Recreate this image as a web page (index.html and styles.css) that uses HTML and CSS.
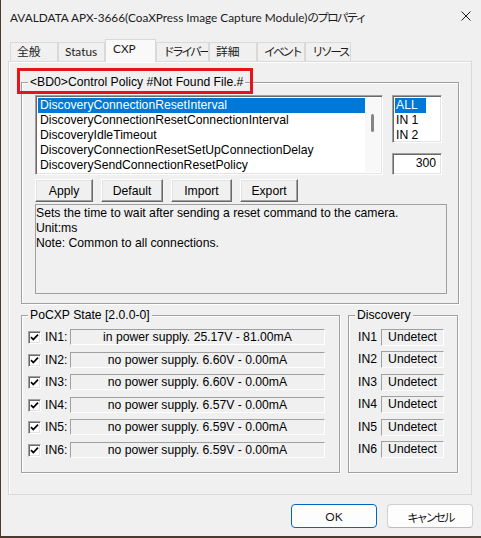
FILE: index.html
```html
<!doctype html>
<html lang="ja">
<head>
<meta charset="utf-8">
<title>AVALDATA APX-3666 properties</title>
<link rel="stylesheet" href="styles.css">
</head>

<body>
<div class="window">
  <div class="titlebar">
    <span class="title">AVALDATA APX-3666(CoaXPress Image Capture Module)<span class="kana">のプロパティ</span></span>
    <svg class="close" width="10" height="10" viewBox="0 0 10 10"><path d="M0.5 0.5L9.5 9.5M9.5 0.5L0.5 9.5"/></svg>
  </div>

  <div class="tabs">
    <div class="tab w48">全般</div>
    <div class="tab w47">Status</div>
    <div class="tab active">CXP</div>
    <div class="tab w53"><span class="kana">ドライバー</span></div>
    <div class="tab w48">詳細</div>
    <div class="tab w48"><span class="kana">イベント</span></div>
    <div class="tab w46"><span class="kana">リソース</span></div>
  </div>

  <div class="panel">
    <div class="group policy">
      <div class="legend">&lt;BD0&gt;Control Policy #Not Found File.#</div>
      <div class="toprow">
        <div class="edge listbox params">
          <div class="items">
            <div class="item sel">DiscoveryConnectionResetInterval</div>
            <div class="item">DiscoveryConnectionResetConnectionInterval</div>
            <div class="item">DiscoveryIdleTimeout</div>
            <div class="item">DiscoveryConnectionResetSetUpConnectionDelay</div>
            <div class="item">DiscoverySendConnectionResetPolicy</div>
          </div>
          <div class="vscroll"><span class="thumb"></span></div>
        </div>
        <div class="side">
          <div class="edge listbox channels">
            <div class="item sel">ALL</div>
            <div class="item">IN 1</div>
            <div class="item">IN 2</div>
          </div>
          <div class="edge value">300</div>
        </div>
      </div>
      <div class="btnrow">
        <button class="btn w58">Apply</button>
        <button class="btn w62">Default</button>
        <button class="btn w61">Import</button>
        <button class="btn w58">Export</button>
      </div>
      <div class="desc">
        Sets the time to wait after sending a reset command to the camera.<br>
        Unit:ms<br>
        Note: Common to all connections.
      </div>
    </div>

    <div class="lower">
      <div class="group pocxp">
        <div class="legend">PoCXP State [2.0.0-0]</div>
        <div class="rows">
          <div class="row"><span class="check"><svg width="9" height="9" viewBox="0 0 9 9"><path d="M1 4.2L3.3 6.6L8 1.6"/></svg></span><span class="lbl">IN1:</span><span class="field">in power supply. 25.17V - 81.00mA</span></div>
          <div class="row"><span class="check"><svg width="9" height="9" viewBox="0 0 9 9"><path d="M1 4.2L3.3 6.6L8 1.6"/></svg></span><span class="lbl">IN2:</span><span class="field">no power supply. 6.60V - 0.00mA</span></div>
          <div class="row"><span class="check"><svg width="9" height="9" viewBox="0 0 9 9"><path d="M1 4.2L3.3 6.6L8 1.6"/></svg></span><span class="lbl">IN3:</span><span class="field">no power supply. 6.60V - 0.00mA</span></div>
          <div class="row"><span class="check"><svg width="9" height="9" viewBox="0 0 9 9"><path d="M1 4.2L3.3 6.6L8 1.6"/></svg></span><span class="lbl">IN4:</span><span class="field">no power supply. 6.57V - 0.00mA</span></div>
          <div class="row"><span class="check"><svg width="9" height="9" viewBox="0 0 9 9"><path d="M1 4.2L3.3 6.6L8 1.6"/></svg></span><span class="lbl">IN5:</span><span class="field">no power supply. 6.59V - 0.00mA</span></div>
          <div class="row"><span class="check"><svg width="9" height="9" viewBox="0 0 9 9"><path d="M1 4.2L3.3 6.6L8 1.6"/></svg></span><span class="lbl">IN6:</span><span class="field">no power supply. 6.59V - 0.00mA</span></div>
        </div>
      </div>
      <div class="group disc">
        <div class="legend">Discovery</div>
        <div class="rows">
          <div class="row"><span class="lbl">IN1</span><span class="field">Undetect</span></div>
          <div class="row"><span class="lbl">IN2</span><span class="field">Undetect</span></div>
          <div class="row"><span class="lbl">IN3</span><span class="field">Undetect</span></div>
          <div class="row"><span class="lbl">IN4</span><span class="field">Undetect</span></div>
          <div class="row"><span class="lbl">IN5</span><span class="field">Undetect</span></div>
          <div class="row"><span class="lbl">IN6</span><span class="field">Undetect</span></div>
        </div>
      </div>
    </div>
  </div>

  <div class="footer">
    <button class="dlgbtn default">OK</button>
    <button class="dlgbtn"><span class="kana">キャンセル</span></button>
  </div>

  <!-- highlight frame around the group caption -->
  <div class="mark"></div>
</div>
</body>
</html>
```

FILE: styles.css
```css
body {
  margin: 0;
  background: #4a3a2f;
}

.window {
  position: relative;
  width: 480px;
  height: 536px;
  margin-left: 1px;
  background: #f0f0f0;
  font-family: "Liberation Sans", Arial, sans-serif;
  font-size: 12.2px;
  color: #000;
}

/* system font for caption, tabs and dialog buttons */
.titlebar,
.tabs,
.dlgbtn {
  font-family: Lato, "Noto Sans CJK JP", sans-serif;
  font-size: 11.8px;
  color: #1b1b1b;
}
.kana {
  letter-spacing: -2.7px;
}
.title .kana {
  letter-spacing: -2px;
}

/* title bar */
.titlebar {
  height: 32px;
  display: flex;
  align-items: center;
  padding: 0 10px 0 9px;
}
.titlebar .title {
  flex: 1;
  white-space: nowrap;
}
.close path {
  stroke: #1b1b1b;
  stroke-width: 1;
  fill: none;
}

/* tabs */
.tabs {
  display: flex;
  align-items: flex-end;
  height: 24px;
  margin-top: 5px;
  padding-left: 9px;
}
.tab {
  height: 19px;
  line-height: 18px;
  padding-left: 6px;
  border: 1px solid #d9d9d9;
  border-bottom: 0;
  box-sizing: border-box;
  white-space: nowrap;
  overflow: hidden;
}
.tab.active {
  position: relative;
  z-index: 1;
  width: 51px;
  height: 23px;
  line-height: 18px;
  padding-left: 7px;
  margin-bottom: -1px;
  background: #f9f9f9;
}
.w46 { width: 46px; }
.w47 { width: 47px; }
.w48 { width: 48px; }
.w53 { width: 53px; }

/* tab page */
.panel {
  width: 464px;
  height: 434px;
  margin-left: 7px;
  box-sizing: border-box;
  border: 1px solid #d9d9d9;
  box-shadow: inset 1px 1px #fff;
  display: flex;
  flex-direction: column;
}

/* etched group box */
.group {
  box-sizing: border-box;
  border: 1px solid #a0a0a0;
  box-shadow: inset 1px 1px #fff, 1px 1px #fff;
}
.legend {
  align-self: flex-start;
  height: 14px;
  line-height: 14px;
  margin-top: -8px;
  padding: 0 2px;
  background: #f0f0f0;
  white-space: nowrap;
}

.policy {
  width: 438px;
  height: 222px;
  margin: 20px 0 0 12px;
  padding-left: 13px;
  display: flex;
  flex-direction: column;
}
.policy .legend {
  margin-left: -7px;
}

.toprow {
  display: flex;
  margin-top: 6px;
}

/* sunken client edge */
.edge {
  box-sizing: border-box;
  border: 1px solid;
  border-color: #a0a0a0 #fff #fff #a0a0a0;
  box-shadow: inset 1px 1px #696969, inset -1px -1px #e3e3e3;
  background: #fff;
}

.listbox {
  padding: 2px;
}
.item {
  height: 15px;
  line-height: 15px;
  padding-left: 2px;
  white-space: nowrap;
  overflow: hidden;
}
.item.sel {
  background: #0078d7;
  color: #fff;
}

.params {
  width: 348px;
  height: 80px;
  display: flex;
}
.params .items {
  width: 329px;
  overflow: hidden;
}
.vscroll {
  width: 15px;
  background: #f8f8f8;
  display: flex;
  justify-content: center;
  padding-top: 16px;
  box-sizing: border-box;
}
.thumb {
  width: 3px;
  height: 18px;
  border-radius: 2px;
  background: #858585;
}

.side {
  display: flex;
  flex-direction: column;
  gap: 10px;
  margin-left: 9px;
}
.channels {
  width: 50px;
  height: 48px;
}
.channels .item {
  width: 31px;
  padding-left: 1px;
  box-sizing: border-box;
}
.value {
  width: 50px;
  height: 22px;
  line-height: 19px;
  text-align: right;
  padding-right: 5px;
}

/* classic push buttons */
.btnrow {
  display: flex;
  gap: 8px;
  margin-top: 4px;
}
.btn {
  height: 23px;
  padding: 0;
  font: inherit;
  color: #000;
  background: #f0f0f0;
  border: 1px solid;
  border-color: #fff #696969 #696969 #fff;
  box-shadow: inset -1px -1px #a0a0a0, inset 1px 1px #e3e3e3;
}
.w58 { width: 58px; }
.w61 { width: 61px; }
.w62 { width: 62px; }

.desc {
  width: 412px;
  height: 90px;
  margin-top: 2px;
  box-sizing: border-box;
  border: 1px solid #a0a0a0;
  padding-top: 1px;
  line-height: 15px;
}

.lower {
  display: flex;
  gap: 8px;
  margin: 11px 0 0 12px;
}
.pocxp,
.disc {
  height: 158px;
  display: flex;
  flex-direction: column;
}
.pocxp {
  width: 319px;
  padding-left: 6px;
}
.disc {
  width: 110px;
  padding-left: 9px;
}
.disc .legend {
  margin-left: -3px;
}

.rows {
  display: flex;
  flex-direction: column;
  gap: 6.6px;
  margin-top: 7px;
}
.row {
  display: flex;
  align-items: center;
  height: 16px;
}

.check {
  width: 13px;
  height: 13px;
  box-sizing: border-box;
  border: 1px solid;
  border-color: #a0a0a0 #fff #fff #a0a0a0;
  box-shadow: inset 1px 1px #696969, inset -1px -1px #e3e3e3;
  background: #fff;
  display: flex;
  align-items: center;
  justify-content: center;
  margin-top: 1px;
}
.check path {
  fill: none;
  stroke: #000;
  stroke-width: 1.7;
}

.pocxp .lbl {
  width: 29px;
  padding-left: 4px;
  box-sizing: border-box;
}
.disc .lbl {
  width: 23px;
  margin-top: -1px;
}

/* static sunken field */
.field {
  box-sizing: border-box;
  height: 16px;
  line-height: 15px;
  border: 1px solid;
  border-color: #a0a0a0 #fff #fff #a0a0a0;
  text-align: center;
  white-space: nowrap;
}
.pocxp .field {
  width: 255px;
}
.disc .field {
  width: 63px;
  height: 17px;
}

/* dialog buttons */
.footer {
  display: flex;
  justify-content: flex-end;
  gap: 10px;
  margin-top: 9px;
  padding-right: 8px;
}
.dlgbtn {
  width: 86px;
  height: 24px;
  padding: 0;
  background: #fdfdfd;
  border: 1px solid #d0d0d0;
  border-bottom-color: #bbb;
  border-radius: 4px;
}
.dlgbtn.default {
  border: 1px solid #0067c0;
  box-shadow: inset 0 0 0 1px #fff;
}

.mark {
  position: absolute;
  left: 16px;
  top: 68px;
  width: 236px;
  height: 26px;
  box-sizing: border-box;
  border: 3px solid #e8141c;
}
```
